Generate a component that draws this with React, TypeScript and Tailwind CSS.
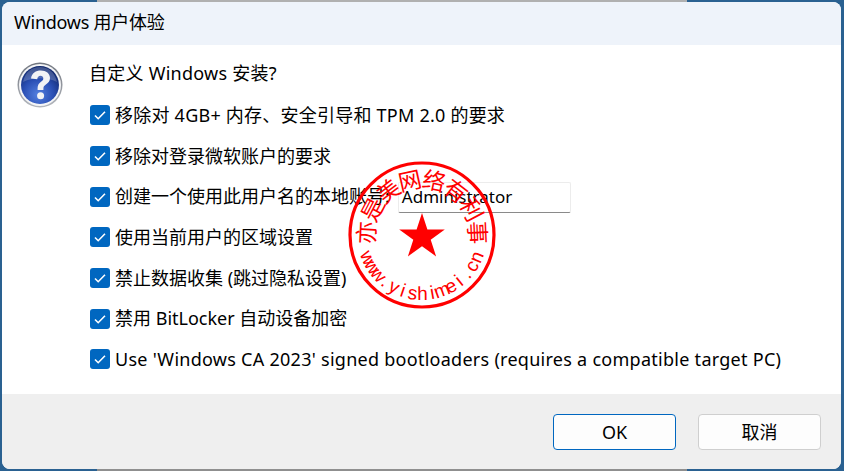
const font = "font-['Noto_Sans','Noto_Sans_CJK_SC',sans-serif]";

const options = [
  { label: "移除对 4GB+ 内存、安全引导和 TPM 2.0 的要求", cls: "tracking-[0.23px]" },
  { label: "移除对登录微软账户的要求", cls: "" },
  { label: "创建一个使用此用户名的本地账号:", cls: "" },
  { label: "使用当前用户的区域设置", cls: "" },
  { label: "禁止数据收集 (跳过隐私设置)", cls: "" },
  { label: "禁用 BitLocker 自动设备加密", cls: "" },
  { label: "Use 'Windows CA 2023' signed bootloaders (requires a compatible target PC)", cls: "tracking-[0.27px]" },
];

function Check() {
  return (
    <span className="ml-[1px] flex h-[20px] w-[20px] shrink-0 items-center justify-center rounded-[3px] bg-[#0067c0]">
      <svg width="14" height="14" viewBox="0 0 14 14" fill="none">
        <path d="M2 7.5l3.2 3.2L12 3.8" stroke="#fff" strokeWidth="1.6" />
      </svg>
    </span>
  );
}

function HelpIcon() {
  return (
    <svg width="46" height="46" viewBox="0 0 46 46" className="mt-[3px] shrink-0">
      <defs>
        <radialGradient id="orb" cx="45%" cy="75%" r="72%">
          <stop offset="0" stopColor="#5480e0" />
          <stop offset="0.55" stopColor="#2a4fb4" />
          <stop offset="1" stopColor="#10286e" />
        </radialGradient>
        <linearGradient id="ring" x1="0" y1="0" x2="0" y2="1">
          <stop offset="0" stopColor="#70757e" />
          <stop offset="1" stopColor="#b4b8be" />
        </linearGradient>
      </defs>
      <circle cx="23" cy="23" r="22.500" fill="url(#ring)" />
      <circle cx="23" cy="23" r="21" fill="#f4f5f7" />
      <circle cx="23" cy="23" r="19" fill="url(#orb)" />
      <path d="M6 20C8 10 15 5 23 5S38 10 40 20C30 15 16 15 6 20Z" fill="#fff" opacity="0.2" />
      <path
        d="M14 16.500C14.800 11 18.900 8.500 23.800 8.500c5.400 0 9.200 3 9.200 7.500 0 3.400-2 5-4.100 6.500-1.800 1.300-2.500 2.100-2.500 4.200v1.300h-5.800v-1.900c0-3.300 1.400-4.800 3.400-6.300 1.500-1.200 2.300-1.800 2.300-3.300 0-1.600-1.100-2.700-2.800-2.700-1.900 0-3 1.200-3.300 3.400z"
        fill="#f2f3f5"
      />
      <circle cx="23.600" cy="33.800" r="3.500" fill="#f2f3f5" />
    </svg>
  );
}

const upperChars = "亦是美网络有利事".split("");
const lowerChars = "www.yishimei.cn".split("");

function Stamp() {
  return (
    <svg width="150" height="150" viewBox="0 0 150 150" className="pointer-events-none absolute left-[347px] top-[160px]">
      <circle cx="75" cy="75" r="72" fill="none" stroke="#ff0000" strokeWidth="3.200" />
      <polygon
        points="75,53 80.400,69.600 97.800,69.600 83.700,79.800 89.100,96.400 75,86.200 60.900,96.400 66.300,79.800 52.200,69.600 69.600,69.600"
        fill="#ff0000"
      />
      {upperChars.map((c, i) => (
        <text
          key={i}
          x="75"
          y="28"
          textAnchor="middle"
          fill="#ff0000"
          fontSize="23"
          fontFamily="'Noto Sans CJK SC', sans-serif"
          transform={`rotate(${-87.5 + i * 25} 75 75)`}
        >
          {c}
        </text>
      ))}
      {lowerChars.map((c, i) => (
        <text
          key={i}
          x="75"
          y="140"
          textAnchor="middle"
          fill="#ff0000"
          fontSize="19"
          fontFamily="'Liberation Sans', sans-serif"
          transform={`rotate(${67 - (i * 135) / 14} 75 75)`}
        >
          {c}
        </text>
      ))}
    </svg>
  );
}

export default function App() {
  return (
    <div className={`${font} relative h-[471px] w-[844px] overflow-hidden bg-[#2a6191] pb-[2px] pl-[2px] pr-[3px] pt-[2px] text-[18px] text-black`}>
      <div className="absolute left-[97px] top-0 h-[3px] w-[590px] bg-[#b0b0b0]" />
      <div className="absolute bottom-0 left-[97px] h-[2px] w-[590px] bg-[#8f8f8f]" />
      <div className="relative flex h-full flex-col overflow-hidden rounded-[8px] bg-white">
        <div className="flex h-[43px] items-center bg-[#eef3fa] pb-[2px] pl-[12px] tracking-[-0.25px]">Windows 用户体验</div>
        <div className="flex flex-1 gap-[26px] pl-[15px] pt-[14px]">
          <HelpIcon />
          <div className="flex flex-col">
            <div className="flex h-[28px] items-center tracking-[0.25px]">自定义 Windows 安装?</div>
            <div className="mt-[14.400px] flex flex-col gap-[12.670px]">
              {options.map((o, i) => (
                <div key={o.label} className="flex h-[28px] items-center gap-[5px]">
                  <Check />
                  <span className={`whitespace-nowrap ${o.cls}`}>{o.label}</span>
                  {i === 2 && (
                    <div className="ml-[3px] mt-[1px] flex h-[31px] w-[173px] items-center rounded-[2px] border border-[#ececec] border-b-[#8a8a8a] bg-white pl-[3px] text-[17px]">
                      Administrator
                    </div>
                  )}
                </div>
              ))}
            </div>
          </div>
        </div>
        <div className="flex h-[75px] items-start justify-end gap-[22px] bg-[#efefef] pr-[20px] pt-[20px]">
          <button className="h-[36px] w-[123px] rounded-[4px] border border-[#0067c0] bg-[#fdfdfd]">OK</button>
          <button className="h-[36px] w-[123px] rounded-[4px] border border-[#cfcfcf] bg-[#fdfdfd]">取消</button>
        </div>
      </div>
      <Stamp />
    </div>
  );
}
